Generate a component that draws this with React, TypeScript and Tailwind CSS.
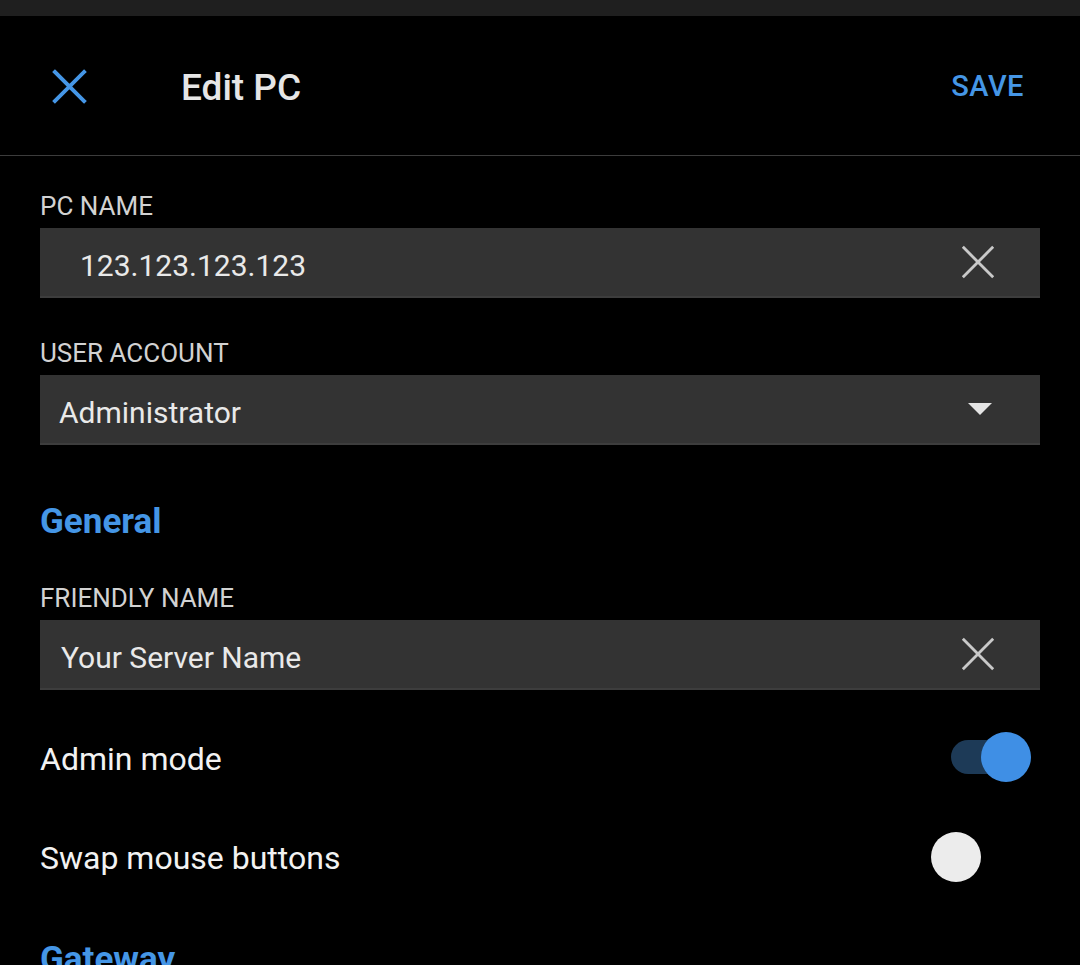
import { useState } from "react";

const BLUE = "#4596e6";

const CloseIcon = ({ className, strokeWidth }: { className?: string; strokeWidth: number }) => (
  <svg viewBox="0 0 36 36" className={className} fill="none" stroke="currentColor" strokeWidth={strokeWidth} strokeLinecap="square">
    <path d="M3 3L33 33M33 3L3 33" />
  </svg>
);

const FieldLabel = ({ children }: { children: string }) => (
  <div className="h-[30px] text-[26px] leading-[30px] text-[#d2d2d2] mb-[7px]">{children}</div>
);

const TextField = ({ value, indent }: { value: string; indent: string }) => (
  <div className={`h-[70px] bg-[#333333] border-b-2 border-[#3d3d3d] flex items-center justify-between pr-[45px] ${indent}`}>
    <span className="text-[30px] text-[#e9e9e9] pt-[6px]">{value}</span>
    <CloseIcon className="w-[34px] h-[34px] text-[#c9c9c9]" strokeWidth={3} />
  </div>
);

const Toggle = ({ on, onClick }: { on: boolean; onClick: () => void }) => (
  <button onClick={onClick} className="relative w-[60px] h-[34px] mr-[29px]">
    <span className={`absolute inset-0 rounded-full ${on ? "bg-[#1d3a57]" : "bg-black"}`} />
    <span
      className={`absolute top-[-8px] w-[50px] h-[50px] rounded-full ${
        on ? "left-[30px] bg-[#3f8fe5]" : "left-[-20px] bg-[#ececec]"
      }`}
    />
  </button>
);

export default function App() {
  const [admin, setAdmin] = useState(true);
  const [swap, setSwap] = useState(false);

  return (
    <div className="w-[1080px] h-[965px] overflow-hidden bg-black" style={{ fontFamily: "Roboto, 'Noto Sans', sans-serif" }}>
      <div className="h-[16px] bg-[#1f1f1f]" />

      {/* Header */}
      <div className="h-[140px] flex items-center border-b border-[#3c3c3c]">
        <div className="w-[181px] pl-[52px] pt-[2px]" style={{ color: BLUE }}>
          <CloseIcon className="w-[35px] h-[35px]" strokeWidth={4} />
        </div>
        <div className="flex-1 text-[37px] font-medium text-[#e6e6e6] pt-[4px]">Edit PC</div>
        <div className="pr-[56px] pt-[3px] text-[29px] font-medium tracking-[0.5px]" style={{ color: BLUE }}>
          SAVE
        </div>
      </div>

      <div className="px-[40px] pt-[35px]">
        <FieldLabel>PC NAME</FieldLabel>
        <TextField value="123.123.123.123" indent="pl-[40px]" />

        <div className="h-[40px]" />
        <FieldLabel>USER ACCOUNT</FieldLabel>
        <div className="h-[70px] bg-[#333333] border-b-2 border-[#3d3d3d] flex items-center justify-between pl-[19px] pr-[48px]">
          <span className="text-[30px] text-[#e9e9e9] pt-[6px]">Administrator</span>
          <svg viewBox="0 0 24 12" className="w-[24px] h-[12px] text-[#e4e4e4]" fill="currentColor">
            <path d="M0 0H24L12 12Z" />
          </svg>
        </div>

        <div className="mt-[57px] h-[40px] text-[35px] leading-[40px] font-bold" style={{ color: BLUE }}>
          General
        </div>

        <div className="h-[41px]" />
        <FieldLabel>FRIENDLY NAME</FieldLabel>
        <TextField value="Your Server Name" indent="pl-[21px]" />

        <div className="mt-[17px] h-[100px] flex items-center justify-between">
          <span className="text-[32px] text-[#f2f2f2] pt-[3px]">Admin mode</span>
          <Toggle on={admin} onClick={() => setAdmin(!admin)} />
        </div>
        <div className="h-[99px] flex items-center justify-between">
          <span className="text-[32px] text-[#f2f2f2] pt-[3px]">Swap mouse buttons</span>
          <Toggle on={swap} onClick={() => setSwap(!swap)} />
        </div>

        <div className="mt-[34px] h-[40px] text-[35px] leading-[40px] font-bold" style={{ color: BLUE }}>
          Gateway
        </div>
      </div>
    </div>
  );
}
